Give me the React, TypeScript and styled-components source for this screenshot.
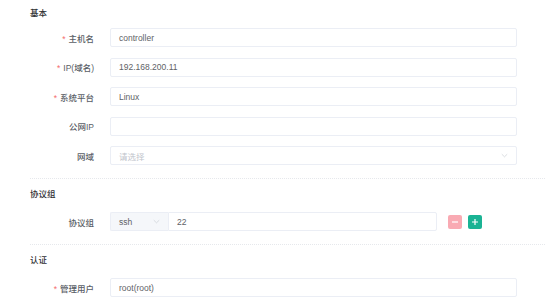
import React from "react";
import styled, { createGlobalStyle } from "styled-components";

const Global = createGlobalStyle`
  html, body { margin: 0; padding: 0; background: #fff; }
  body { font-family: "Liberation Sans", "Noto Sans CJK SC", sans-serif; }
`;

const Page = styled.div`
  width: 554px;
  height: 303px;
  overflow: hidden;
  padding: 6px 9px 0 30px;
  box-sizing: border-box;
`;

const Section = styled.div<{ $last?: boolean }>`
  border-bottom: ${(p) => (p.$last ? "none" : "1px dotted #e6e8ec")};
  padding-bottom: 13px;
  margin-bottom: 8px;
`;

const SectionTitle = styled.div<{ $first?: boolean }>`
  font-size: 8.5px;
  font-weight: 500;
  line-height: 14px;
  color: #303133;
  margin-bottom: ${(p) => (p.$first ? "8px" : "11px")};
`;

const Rows = styled.div`
  display: flex;
  flex-direction: column;
  gap: 10.5px;
`;

const Row = styled.div`
  display: flex;
  align-items: center;
  height: 19px;
`;

const Label = styled.div`
  width: 64px;
  flex: none;
  padding-right: 16px;
  text-align: right;
  font-size: 8.5px;
  font-weight: 500;
  color: #5a5e66;
  white-space: nowrap;
`;

const Star = styled.span`
  color: #f56c6c;
  margin-right: 3px;
`;

const Field = styled.div<{ $placeholder?: boolean }>`
  width: 407px;
  flex: none;
  height: 19px;
  box-sizing: border-box;
  border: 1px solid #ebeef5;
  border-radius: 2px;
  padding: 0 8px;
  display: flex;
  align-items: center;
  justify-content: space-between;
  font-size: 8.5px;
  color: ${(p) => (p.$placeholder ? "#c0c4cc" : "#606266")};
`;

const Group = styled.div`
  display: flex;
  width: 327px;
  height: 19px;
`;

const SelectPart = styled.div`
  width: 58px;
  box-sizing: border-box;
  height: 19px;
  background: #f5f7fa;
  border: 1px solid #ebeef5;
  border-right: none;
  border-radius: 2px 0 0 2px;
  padding: 0 8px;
  display: flex;
  align-items: center;
  justify-content: space-between;
  font-size: 8.5px;
  color: #606266;
`;

const GroupInput = styled.div`
  flex: 1;
  box-sizing: border-box;
  height: 19px;
  border: 1px solid #ebeef5;
  border-radius: 0 2px 2px 0;
  padding: 0 8px;
  display: flex;
  align-items: center;
  font-size: 8.5px;
  color: #606266;
`;

const Btns = styled.div`
  display: flex;
  gap: 6px;
  margin-left: 11px;
`;

const IconBtn = styled.div<{ $kind: "minus" | "plus" }>`
  width: 14px;
  height: 14px;
  border-radius: 2px;
  background: ${(p) => (p.$kind === "minus" ? "#f9aab3" : "#1ab394")};
  display: flex;
  align-items: center;
  justify-content: center;
`;

const Chevron = () => (
  <svg width="7" height="5" viewBox="0 0 7 5">
    <path d="M0.8 1.2 L3.5 3.8 L6.2 1.2" fill="none" stroke="#ccd0d6" strokeWidth="0.7" />
  </svg>
);

const Sign = ({ plus }: { plus?: boolean }) => (
  <svg width="8" height="8" viewBox="0 0 8 8">
    <path d={plus ? "M1 4 H7 M4 1 V7" : "M1 4 H7"} stroke="#fff" strokeWidth="1.2" />
  </svg>
);

type F = { label: string; req?: boolean; value?: string; placeholder?: string; select?: boolean };

const basics: F[] = [
  { label: "主机名", req: true, value: "controller" },
  { label: "IP(域名)", req: true, value: "192.168.200.11" },
  { label: "系统平台", req: true, value: "Linux" },
  { label: "公网IP", value: "" },
  { label: "网域", placeholder: "请选择", select: true },
];

const FieldRow = ({ f }: { f: F }) => (
  <Row>
    <Label>
      {f.req && <Star>*</Star>}
      {f.label}
    </Label>
    <Field $placeholder={!!f.placeholder}>
      <span>{f.value || f.placeholder || ""}</span>
      {f.select && <Chevron />}
    </Field>
  </Row>
);

export default function App() {
  return (
    <>
      <Global />
      <Page>
        <Section>
          <SectionTitle $first>基本</SectionTitle>
          <Rows>
            {basics.map((f) => (
              <FieldRow key={f.label} f={f} />
            ))}
          </Rows>
        </Section>
        <Section>
          <SectionTitle>协议组</SectionTitle>
          <Rows>
            <Row>
              <Label>协议组</Label>
              <Group>
                <SelectPart>
                  <span>ssh</span>
                  <Chevron />
                </SelectPart>
                <GroupInput>22</GroupInput>
              </Group>
              <Btns>
                <IconBtn $kind="minus">
                  <Sign />
                </IconBtn>
                <IconBtn $kind="plus">
                  <Sign plus />
                </IconBtn>
              </Btns>
            </Row>
          </Rows>
        </Section>
        <Section $last>
          <SectionTitle>认证</SectionTitle>
          <Rows>
            <FieldRow f={{ label: "管理用户", req: true, value: "root(root)" }} />
          </Rows>
        </Section>
      </Page>
    </>
  );
}
